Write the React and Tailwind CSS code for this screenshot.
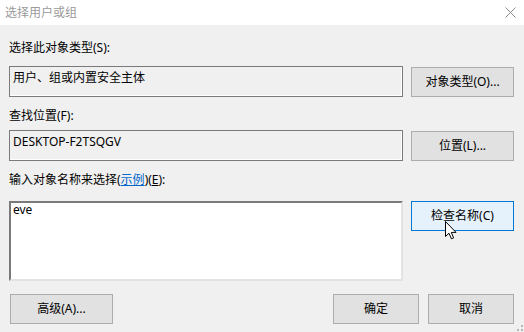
import React from "react";

const font = { fontFamily: '"Noto Sans", "Noto Sans CJK SC", sans-serif' };

function Btn({ children, className = "" }) {
  return (
    <div
      className={
        "flex items-center justify-center border border-[#adadad] bg-[#e1e1e1] text-[12px] text-black " +
        className
      }
    >
      {children}
    </div>
  );
}

export default function App() {
  return (
    <div
      className="relative h-[332px] w-[524px] overflow-hidden bg-[#f0f0f0] text-[12px] text-black"
      style={font}
    >
      {/* title bar */}
      <div className="flex h-[25px] items-center justify-between bg-white pl-[5px] pr-[8px]">
        <span className="text-[12px] leading-4 text-[#9a9a9a]">选择用户或组</span>
        <svg width="11" height="11" viewBox="0 0 11 11" className="mr-[0px]">
          <path d="M0.5 0.5 L10.5 10.5 M10.5 0.5 L0.5 10.5" stroke="#8a8a8a" strokeWidth="1" fill="none" />
        </svg>
      </div>

      <div className="flex flex-col pl-[9px] pr-[10px]">
        <div className="mt-[15px] h-4 leading-4">选择此对象类型(S):</div>
        <div className="mt-[10px] flex items-start gap-[8px]">
          <div className="h-[31px] w-[394px] border border-[#7a7a7a] pl-[3px] pt-[3px] leading-4 shadow-[inset_-1px_-1px_0_#ffffff]">
            用户、组或内置安全主体
          </div>
          <Btn className="mt-[1px] h-[30px] w-[103px]">对象类型(O)...</Btn>
        </div>

        <div className="mt-[11px] h-4 leading-4">查找位置(F):</div>
        <div className="mt-[6px] flex items-start gap-[8px]">
          <div className="h-[31px] w-[394px] border border-[#7a7a7a] pl-[3px] pt-[3px] leading-4 shadow-[inset_-1px_-1px_0_#ffffff]">
            DESKTOP-F2TSQGV
          </div>
          <Btn className="mt-[1px] h-[30px] w-[103px]">位置(L)...</Btn>
        </div>

        <div className="mt-[11px] h-4 leading-4">
          输入对象名称来选择(<span className="text-[#0066cc] underline">示例</span>)(<span className="underline">E</span>):
        </div>
        <div className="mt-[13px] flex items-start gap-[8px]">
          <div className="h-[80px] w-[394px] border-2 border-b-[#e3e3e3] border-l-[#7a7a7a] border-r-[#e3e3e3] border-t-[#7a7a7a] bg-white pl-[2px] leading-[14px]">
            eve
          </div>
          <div className="flex h-[30px] w-[103px] items-center justify-center border border-[#0078d7] bg-[#e5f1fb]">
            检查名称(C)
          </div>
        </div>

        <div className="mt-[13px] flex items-start">
          <Btn className="ml-[1px] h-[30px] w-[103px]">高级(A)...</Btn>
          <div className="flex-1" />
          <Btn className="h-[30px] w-[86px]">确定</Btn>
          <Btn className="ml-[9px] h-[30px] w-[86px]">取消</Btn>
        </div>
      </div>

      {/* mouse cursor */}
      <svg
        className="absolute left-[445px] top-[221px]"
        width="13"
        height="19"
        viewBox="0 0 13 19"
      >
        <path
          d="M0.5 0.5 L0.5 15.5 L4 12.2 L6.4 17.8 L8.6 16.9 L6.3 11.4 L11 11.4 Z"
          fill="#ffffff"
          stroke="#000000"
          strokeWidth="1"
          strokeLinejoin="miter"
        />
      </svg>

      {/* resize grip */}
      <svg className="absolute bottom-[1px] right-[1px]" width="6" height="6" viewBox="0 0 6 6">
        <rect x="4" y="0" width="2" height="2" fill="#b8b8b8" />
        <rect x="0" y="4" width="2" height="2" fill="#b8b8b8" />
        <rect x="4" y="4" width="2" height="2" fill="#b8b8b8" />
      </svg>
    </div>
  );
}
